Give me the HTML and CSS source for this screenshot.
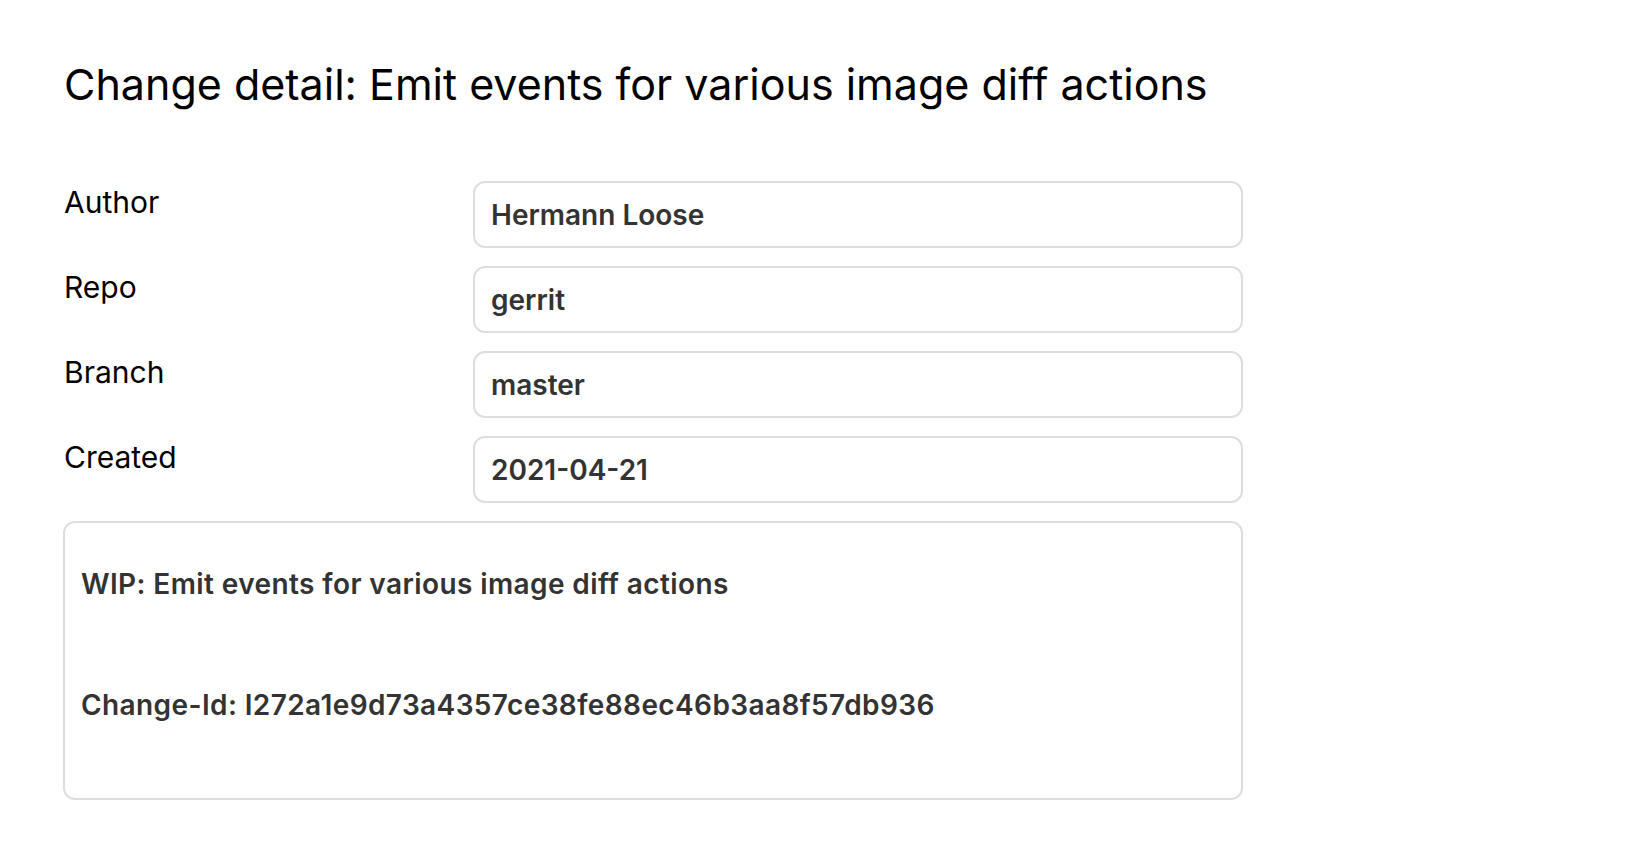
FILE: index.html
```html
<!DOCTYPE html>
<html lang="en">
<head>
<meta charset="utf-8">
<title>Change detail</title>
<link rel="stylesheet" href="styles.css">
</head>
<body>
<main class="page">
  <h1 class="title">Change detail: Emit events for various image diff actions</h1>
  <div class="details">
    <div class="label">Author</div>
    <div class="field">Hermann Loose</div>
    <div class="label">Repo</div>
    <div class="field">gerrit</div>
    <div class="label">Branch</div>
    <div class="field">master</div>
    <div class="label">Created</div>
    <div class="field">2021-04-21</div>
    <div class="message">
      <p class="msg-line">WIP: Emit events for various image diff actions</p>
      <p class="msg-line msg-id">Change-Id: I272a1e9d73a4357ce38fe88ec46b3aa8f57db936</p>
    </div>
  </div>
</main>
</body>
</html>
```

FILE: styles.css
```css
* { box-sizing: border-box; }
html, body { margin: 0; padding: 0; background: #fff; }
body {
  font-family: Inter, "Noto Sans", "Liberation Sans", sans-serif;
  color: #000;
}
.page {
  padding: 59px 0 0 63px;
  width: 1243px;
}
.title {
  margin: 0 0 71px 1px;
  font-size: 43px;
  font-weight: 400;
  line-height: 51px;
  color: #000;
}
.details {
  display: grid;
  grid-template-columns: 410px 770px;
  row-gap: 18px;
}
.label {
  font-size: 30px;
  line-height: normal;
  margin-top: 3px;
  padding-left: 1px;
  color: #000;
}
.field {
  height: 67px;
  border: 2px solid #dedede;
  border-radius: 12px;
  padding: 15px 16px 0;
  font-size: 28px;
  font-weight: 600;
  line-height: normal;
  color: #333;
}
.message {
  grid-column: 1 / -1;
  height: 279px;
  border: 2px solid #dedede;
  border-radius: 12px;
  padding: 44px 16px 0;
  font-size: 28px;
  font-weight: 600;
  letter-spacing: 0.4px;
  color: #333;
}
.msg-line {
  margin: 0;
  line-height: normal;
}
.msg-id {
  margin-top: 87px;
}
```
